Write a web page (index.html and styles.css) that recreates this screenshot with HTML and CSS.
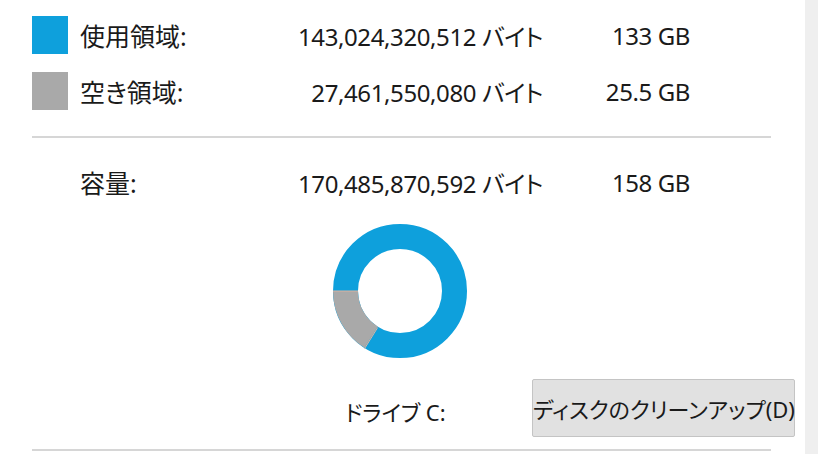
FILE: index.html
```html
<!DOCTYPE html>
<html lang="ja">
<head>
  <meta charset="UTF-8">
  <title>プロパティ</title>
  <link rel="stylesheet" href="styles.css">
</head>
<body>
  <div class="page">
    <div class="panel">
      <div class="row">
        <span class="swatch used"></span>
        <span class="label">使用領域:</span>
        <span class="bytes">143,024,320,512 バイト</span>
        <span class="size">133 GB</span>
      </div>
      <div class="row">
        <span class="swatch free"></span>
        <span class="label">空き領域:</span>
        <span class="bytes">27,461,550,080 バイト</span>
        <span class="size">25.5 GB</span>
      </div>

      <hr class="divider top-divider">

      <div class="row capacity">
        <span></span>
        <span class="label">容量:</span>
        <span class="bytes">170,485,870,592 バイト</span>
        <span class="size">158 GB</span>
      </div>

      <svg class="donut" width="136" height="136" viewBox="0 0 136 136">
        <circle cx="68" cy="68" r="54.5" fill="none" stroke="#0ea0dc" stroke-width="25"/>
        <path d="M13.5 68 A54.5 54.5 0 0 0 39.12 114.22" fill="none" stroke="#a9a9a9" stroke-width="25"/>
        <line x1="1" y1="68" x2="26" y2="68" stroke="#dcb4a2" stroke-width="1"/>
        <line x1="32.5" y1="125.7" x2="45.7" y2="104.5" stroke="#dcb4a2" stroke-width="1"/>
      </svg>

      <div class="drive-row">
        <span class="drive-label">ドライブ C:</span>
        <button class="cleanup">ディスクのクリーンアップ(D)</button>
      </div>

      <hr class="divider bottom-divider">
    </div>
    <div class="edge"></div>
  </div>
</body>
</html>
```

FILE: styles.css
```css
html, body {
  margin: 0;
  padding: 0;
  background: #fff;
}
body {
  font-family: "Noto Sans", "Noto Sans CJK JP", sans-serif;
  font-feature-settings: "palt";
  color: #1a1a1a;
  overflow: hidden;
}
.page {
  display: flex;
  height: 454px;
}
.panel {
  width: 739px;
  margin-left: 32px;
  padding-top: 16px;
}
.edge {
  margin-left: auto;
  width: 13px;
  background: #efefef;
}
.row {
  display: grid;
  grid-template-columns: 48px 180px 283px 147px;
  align-items: center;
  height: 38px;
  margin-bottom: 18px;
  font-size: 25px;
}
.row .bytes,
.row .size {
  text-align: right;
  white-space: nowrap;
  font-size: 24px;
  letter-spacing: -0.4px;
}
.swatch {
  display: block;
  width: 36px;
  height: 38px;
}
.used { background-color: #0ea0dc; }
.free { background-color: #a9a9a9; }

.divider {
  border: none;
  height: 2px;
  background: #d6d6d6;
  margin: 0;
}
.top-divider {
  margin-top: 26px;
  margin-bottom: 25px;
}
.capacity {
  margin-bottom: 22px;
}
.donut {
  display: block;
  margin-left: 300px;
}
.drive-row {
  display: grid;
  grid-template-columns: 500px 263px;
  align-items: end;
  margin-top: 20px;
}
.drive-label {
  padding-left: 313px;
  font-size: 22px;
  line-height: 30px;
  margin-bottom: 10px;
  white-space: nowrap;
}
.cleanup {
  height: 58px;
  padding: 0;
  background: #e1e1e1;
  border: 1px solid #c4c4c4;
  border-radius: 2px;
  font-family: "Noto Sans", "Noto Sans CJK JP", sans-serif;
  font-feature-settings: "palt";
  font-size: 22px;
  color: #1a1a1a;
  white-space: nowrap;
  overflow: visible;
}
.bottom-divider {
  margin-top: 12px;
}
```
